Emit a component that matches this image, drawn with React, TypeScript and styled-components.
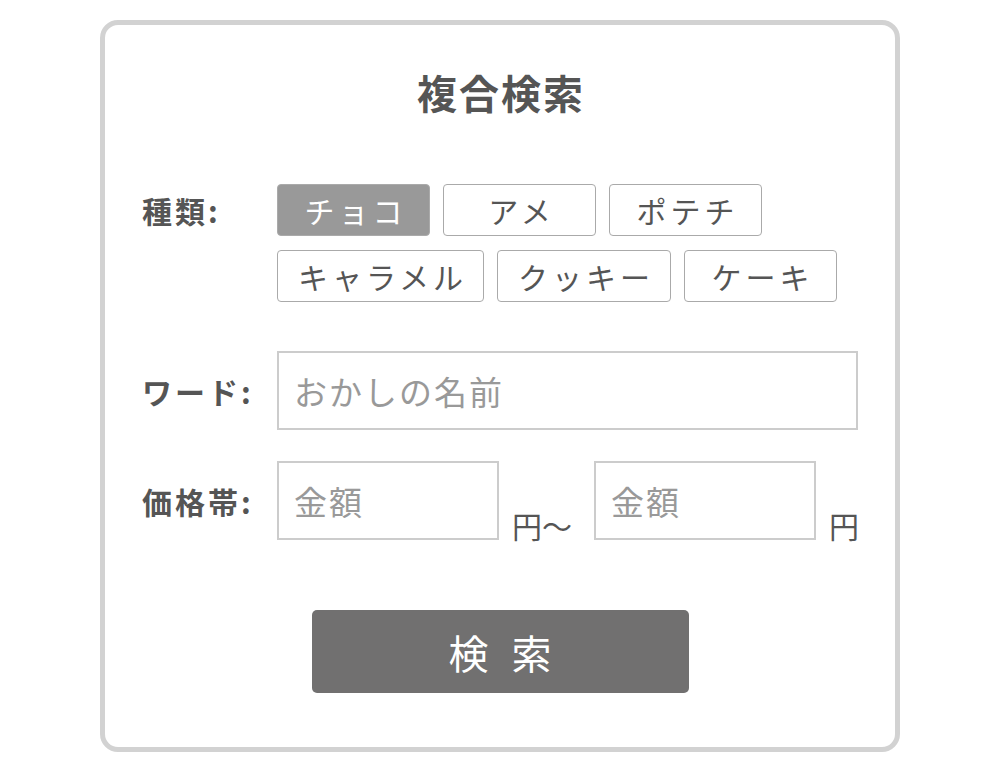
import React from 'react';
import styled, { createGlobalStyle } from 'styled-components';

const GlobalStyle = createGlobalStyle`
  html, body {
    margin: 0;
    padding: 0;
    background: #fff;
  }
  body {
    font-family: "Noto Sans CJK JP", "Noto Sans", sans-serif;
    color: #555;
  }
  * {
    box-sizing: border-box;
  }
`;

const Card = styled.div`
  width: 800px;
  height: 732px;
  margin: 20px auto 0;
  border: 5px solid #d2d2d2;
  border-radius: 18px;
  padding: 47px 37px 0;
  display: flex;
  flex-direction: column;
`;

const Title = styled.h1`
  margin: 0;
  font-size: 40px;
  line-height: 40px;
  font-weight: 700;
  letter-spacing: 2px;
  padding-left: 2px;
  text-align: center;
  color: #555;
`;

const Row = styled.div<{ $top: number; $align?: string }>`
  display: flex;
  align-items: ${p => p.$align || 'center'};
  margin-top: ${p => p.$top}px;
`;

const Label = styled.div<{ $self?: string }>`
  width: 135px;
  flex-shrink: 0;
  font-size: 30px;
  font-weight: 700;
  letter-spacing: 3px;
  line-height: 52px;
  color: #555;
  align-self: ${p => p.$self || 'auto'};
`;

const ChipWrap = styled.div`
  display: flex;
  flex-wrap: wrap;
  gap: 14px 13px;
  width: 580px;
`;

const Chip = styled.button<{ $active?: boolean }>`
  height: 52px;
  min-width: 153px;
  padding: 0 16px 0 20px;
  border: 1px solid #aaa;
  border-radius: 4px;
  background: ${p => (p.$active ? '#999' : '#fff')};
  color: ${p => (p.$active ? '#fff' : '#555')};
  font-family: inherit;
  font-size: 30px;
  letter-spacing: 4px;
  line-height: 50px;
  cursor: pointer;
`;

const TextInput = styled.input<{ $w: number }>`
  width: ${p => p.$w}px;
  height: 79px;
  border: 2px solid #ccc;
  padding: 0 15px;
  font-family: inherit;
  font-size: 33px;
  letter-spacing: 2px;
  color: #555;
  outline: none;
  &::placeholder {
    color: #999;
  }
`;

const Unit = styled.span<{ $right?: number }>`
  font-size: 30px;
  line-height: 30px;
  color: #555;
  margin: 0 ${p => p.$right ?? 0}px 0 13px;
`;

const SearchButton = styled.button`
  align-self: center;
  margin-top: 70px;
  width: 377px;
  height: 83px;
  border: none;
  border-radius: 5px;
  background: #717070;
  color: #fff;
  font-family: inherit;
  font-size: 40px;
  letter-spacing: 7px;
  padding-left: 13px;
  cursor: pointer;
`;

const kinds = ['チョコ', 'アメ', 'ポテチ', 'キャラメル', 'クッキー', 'ケーキ'];

export default function App() {
  return (
    <>
      <GlobalStyle />
      <Card>
        <Title>複合検索</Title>
        <Row $top={72} $align="flex-start">
          <Label>種類:</Label>
          <ChipWrap>
            {kinds.map((k, i) => (
              <Chip key={k} $active={i === 0}>
                {k}
              </Chip>
            ))}
          </ChipWrap>
        </Row>
        <Row $top={49}>
          <Label>ワード:</Label>
          <TextInput $w={582} placeholder="おかしの名前" />
        </Row>
        <Row $top={31} $align="flex-end">
          <Label $self="center">価格帯:</Label>
          <TextInput $w={222} placeholder="金額" />
          <Unit $right={22}>円〜</Unit>
          <TextInput $w={222} placeholder="金額" />
          <Unit>円</Unit>
        </Row>
        <SearchButton>検 索</SearchButton>
      </Card>
    </>
  );
}
